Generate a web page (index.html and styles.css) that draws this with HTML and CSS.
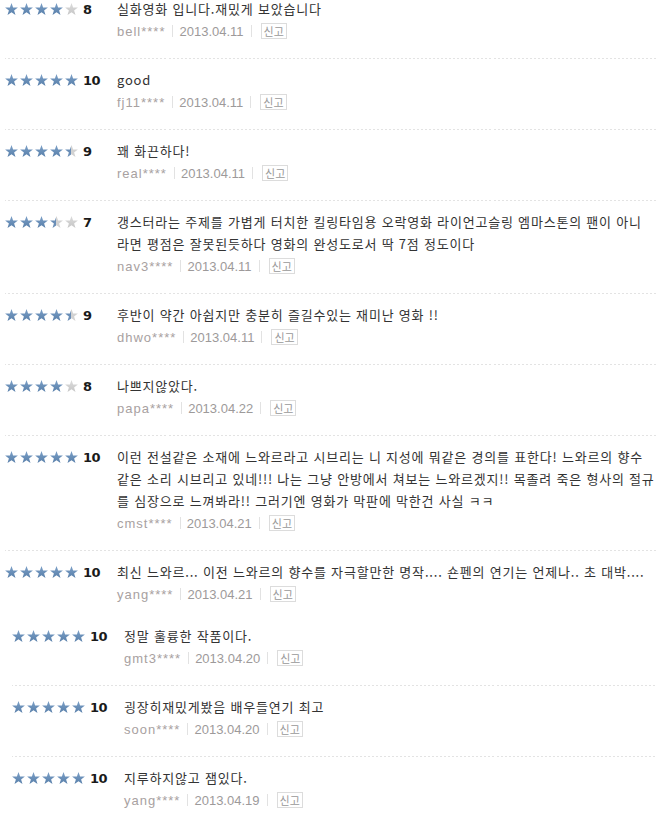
FILE: index.html
```html
<!DOCTYPE html>
<html lang="ko">
<head>
<meta charset="utf-8">
<title>네티즌 평점</title>
<link rel="stylesheet" href="styles.css">
</head>
<body>
<svg class="defs" width="0" height="0" aria-hidden="true">
  <defs>
    <linearGradient id="g-full" x1="0" y1="0" x2="0" y2="1">
      <stop offset="0" stop-color="#7da1c8"/>
      <stop offset="1" stop-color="#577ea9"/>
    </linearGradient>
    <linearGradient id="g-empty" x1="0" y1="0" x2="0" y2="1">
      <stop offset="0" stop-color="#dcdcdc"/>
      <stop offset="1" stop-color="#c6c6c6"/>
    </linearGradient>
    <linearGradient id="g-half" x1="0" y1="0" x2="1" y2="0">
      <stop offset="0" stop-color="#6a8eb7"/>
      <stop offset="0.5" stop-color="#6a8eb7"/>
      <stop offset="0.5" stop-color="#d2d2d2"/>
      <stop offset="1" stop-color="#d2d2d2"/>
    </linearGradient>
    <symbol id="star" viewBox="0 0 13 12">
      <path d="M6.5 0 L8.1 4.4 L12.9 4.5 L9.1 7.4 L10.5 12 L6.5 9.3 L2.5 12 L3.9 7.4 L0.1 4.5 L4.9 4.4 Z"/>
    </symbol>
  </defs>
</svg>

<ul class="list list-main">
  <li class="item">
    <div class="score">
      <span class="stars"><svg class="s full"><use href="#star"/></svg><svg class="s full"><use href="#star"/></svg><svg class="s full"><use href="#star"/></svg><svg class="s full"><use href="#star"/></svg><svg class="s empty"><use href="#star"/></svg></span>
      <em class="num">8</em>
    </div>
    <div class="body">
      <p class="text">실화영화 입니다.재밌게 보았습니다</p>
      <div class="meta"><span class="user">bell****</span><span class="bar"></span><span class="date">2013.04.11</span><span class="bar"></span><button class="report">신고</button></div>
    </div>
  </li>
  <li class="item">
    <div class="score">
      <span class="stars"><svg class="s full"><use href="#star"/></svg><svg class="s full"><use href="#star"/></svg><svg class="s full"><use href="#star"/></svg><svg class="s full"><use href="#star"/></svg><svg class="s full"><use href="#star"/></svg></span>
      <em class="num">10</em>
    </div>
    <div class="body">
      <p class="text">good</p>
      <div class="meta"><span class="user">fj11****</span><span class="bar"></span><span class="date">2013.04.11</span><span class="bar"></span><button class="report">신고</button></div>
    </div>
  </li>
  <li class="item">
    <div class="score">
      <span class="stars"><svg class="s full"><use href="#star"/></svg><svg class="s full"><use href="#star"/></svg><svg class="s full"><use href="#star"/></svg><svg class="s full"><use href="#star"/></svg><svg class="s half"><use href="#star"/></svg></span>
      <em class="num">9</em>
    </div>
    <div class="body">
      <p class="text">꽤 화끈하다!</p>
      <div class="meta"><span class="user">real****</span><span class="bar"></span><span class="date">2013.04.11</span><span class="bar"></span><button class="report">신고</button></div>
    </div>
  </li>
  <li class="item">
    <div class="score">
      <span class="stars"><svg class="s full"><use href="#star"/></svg><svg class="s full"><use href="#star"/></svg><svg class="s full"><use href="#star"/></svg><svg class="s half"><use href="#star"/></svg><svg class="s empty"><use href="#star"/></svg></span>
      <em class="num">7</em>
    </div>
    <div class="body">
      <p class="text">갱스터라는 주제를 가볍게 터치한 킬링타임용 오락영화 라이언고슬링 엠마스톤의 팬이 아니<wbr>라면 평점은 잘못된듯하다 영화의 완성도로서 딱 7점 정도이다</p>
      <div class="meta"><span class="user">nav3****</span><span class="bar"></span><span class="date">2013.04.11</span><span class="bar"></span><button class="report">신고</button></div>
    </div>
  </li>
  <li class="item">
    <div class="score">
      <span class="stars"><svg class="s full"><use href="#star"/></svg><svg class="s full"><use href="#star"/></svg><svg class="s full"><use href="#star"/></svg><svg class="s full"><use href="#star"/></svg><svg class="s half"><use href="#star"/></svg></span>
      <em class="num">9</em>
    </div>
    <div class="body">
      <p class="text">후반이 약간 아쉽지만 충분히 즐길수있는 재미난 영화 !!</p>
      <div class="meta"><span class="user">dhwo****</span><span class="bar"></span><span class="date">2013.04.11</span><span class="bar"></span><button class="report">신고</button></div>
    </div>
  </li>
  <li class="item">
    <div class="score">
      <span class="stars"><svg class="s full"><use href="#star"/></svg><svg class="s full"><use href="#star"/></svg><svg class="s full"><use href="#star"/></svg><svg class="s full"><use href="#star"/></svg><svg class="s empty"><use href="#star"/></svg></span>
      <em class="num">8</em>
    </div>
    <div class="body">
      <p class="text">나쁘지않았다.</p>
      <div class="meta"><span class="user">papa****</span><span class="bar"></span><span class="date">2013.04.22</span><span class="bar"></span><button class="report">신고</button></div>
    </div>
  </li>
  <li class="item">
    <div class="score">
      <span class="stars"><svg class="s full"><use href="#star"/></svg><svg class="s full"><use href="#star"/></svg><svg class="s full"><use href="#star"/></svg><svg class="s full"><use href="#star"/></svg><svg class="s full"><use href="#star"/></svg></span>
      <em class="num">10</em>
    </div>
    <div class="body">
      <p class="text">이런 전설같은 소재에 느와르라고 시브리는 니 지성에 뭐같은 경의를 표한다! 느와르의 향수 같은 소리 시브리고 있네!!! 나는 그냥 안방에서 쳐보는 느와르겠지!! 목졸려 죽은 형사의 절규 를 심장으로 느껴봐라!! 그러기엔 영화가 막판에 막한건 사실 ㅋㅋ</p>
      <div class="meta"><span class="user">cmst****</span><span class="bar"></span><span class="date">2013.04.21</span><span class="bar"></span><button class="report">신고</button></div>
    </div>
  </li>
  <li class="item">
    <div class="score">
      <span class="stars"><svg class="s full"><use href="#star"/></svg><svg class="s full"><use href="#star"/></svg><svg class="s full"><use href="#star"/></svg><svg class="s full"><use href="#star"/></svg><svg class="s full"><use href="#star"/></svg></span>
      <em class="num">10</em>
    </div>
    <div class="body">
      <p class="text">최신 느와르... 이전 느와르의 향수를 자극할만한 명작.... 숀펜의 연기는 언제나.. 초 대박....</p>
      <div class="meta"><span class="user">yang****</span><span class="bar"></span><span class="date">2013.04.21</span><span class="bar"></span><button class="report">신고</button></div>
    </div>
  </li>
</ul>

<ul class="list list-more">
  <li class="item">
    <div class="score">
      <span class="stars"><svg class="s full"><use href="#star"/></svg><svg class="s full"><use href="#star"/></svg><svg class="s full"><use href="#star"/></svg><svg class="s full"><use href="#star"/></svg><svg class="s full"><use href="#star"/></svg></span>
      <em class="num">10</em>
    </div>
    <div class="body">
      <p class="text">정말 훌륭한 작품이다.</p>
      <div class="meta"><span class="user">gmt3****</span><span class="bar"></span><span class="date">2013.04.20</span><span class="bar"></span><button class="report">신고</button></div>
    </div>
  </li>
  <li class="item">
    <div class="score">
      <span class="stars"><svg class="s full"><use href="#star"/></svg><svg class="s full"><use href="#star"/></svg><svg class="s full"><use href="#star"/></svg><svg class="s full"><use href="#star"/></svg><svg class="s full"><use href="#star"/></svg></span>
      <em class="num">10</em>
    </div>
    <div class="body">
      <p class="text">굉장히재밌게봤음 배우들연기 최고</p>
      <div class="meta"><span class="user">soon****</span><span class="bar"></span><span class="date">2013.04.20</span><span class="bar"></span><button class="report">신고</button></div>
    </div>
  </li>
  <li class="item">
    <div class="score">
      <span class="stars"><svg class="s full"><use href="#star"/></svg><svg class="s full"><use href="#star"/></svg><svg class="s full"><use href="#star"/></svg><svg class="s full"><use href="#star"/></svg><svg class="s full"><use href="#star"/></svg></span>
      <em class="num">10</em>
    </div>
    <div class="body">
      <p class="text">지루하지않고 잼있다.</p>
      <div class="meta"><span class="user">yang****</span><span class="bar"></span><span class="date">2013.04.19</span><span class="bar"></span><button class="report">신고</button></div>
    </div>
  </li>
</ul>
</body>
</html>
```

FILE: styles.css
```css
html, body {
  margin: 0;
  padding: 0;
  background: #fff;
}

body {
  font-family: "Noto Sans CJK KR", "Liberation Sans", sans-serif;
  font-size: 13px;
  color: #333;
  overflow: hidden;
}

.defs {
  position: absolute;
  width: 0;
  height: 0;
}

.list {
  list-style: none;
  margin: 0;
  padding: 0;
}

.list-main {
  margin: -12px 0 0 5px;
}

.list-more {
  margin: 0 0 0 12px;
}

.item {
  display: flex;
  padding: 10px 0 16px;
  border-bottom: 1px solid transparent;
  border-image: repeating-linear-gradient(to right, #e3e3e3 0 2px, transparent 2px 4px) 1;
}

.list-main .item:last-child {
  border-bottom: 0;
  padding-bottom: 10px;
}

.score {
  flex: 0 0 112px;
  display: flex;
  align-items: center;
  height: 22px;
}

.stars {
  display: flex;
  gap: 2px;
}

.s {
  width: 13px;
  height: 12px;
  display: block;
}

.s.full { fill: url(#g-full); }
.s.empty { fill: url(#g-empty); }
.s.half { fill: url(#g-half); }

.num {
  font-style: normal;
  font-family: "DejaVu Sans", sans-serif;
  font-weight: bold;
  font-size: 13px;
  color: #1a1a1a;
  margin-left: 5px;
  letter-spacing: -0.5px;
}

.body {
  flex: 1;
  min-width: 0;
}

.text {
  margin: 0;
  line-height: 22px;
  letter-spacing: 0.8px;
  word-break: keep-all;
  color: #333;
}

.meta {
  display: flex;
  align-items: center;
  height: 22px;
  font-family: "Liberation Sans", sans-serif;
  font-size: 13px;
  color: #a8a1a1;
}

.user {
  letter-spacing: 1px;
}

.date {
  color: #9d9a9a;
}

.bar {
  width: 1px;
  height: 12px;
  background: #e2e2e2;
  margin: 0 6px 0 7px;
}

.report {
  font-family: "Noto Sans CJK KR", sans-serif;
  font-size: 11px;
  line-height: 13px;
  height: 16px;
  padding: 0 2px;
  margin: 0 0 0 3px;
  border: 1px solid #dcdcdc;
  background: #fff;
  color: #999;
}
```
